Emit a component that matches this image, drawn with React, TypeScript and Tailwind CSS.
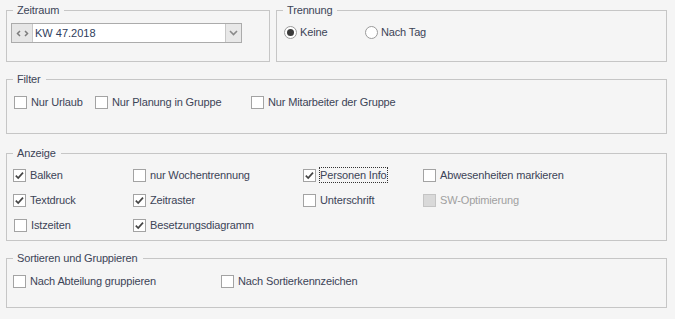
import React from "react";

const TEXT = "text-[#3c4457]";

function Box({ checked, disabled }: { checked?: boolean; disabled?: boolean }) {
  return (
    <span
      className={
        "flex h-[13px] w-[13px] shrink-0 items-center justify-center border " +
        (disabled ? "border-[#c4c4c4] bg-[#d9d9d9]" : "border-[#a3a3a3] bg-white")
      }
    >
      {checked && (
        <svg width="11" height="11" viewBox="0 0 11 11">
          <path d="M1.8 5.6 L4.2 8 L9 2.6" fill="none" stroke="#454545" strokeWidth="1.7" />
        </svg>
      )}
    </span>
  );
}

function Check({
  label,
  checked,
  disabled,
  focused,
  className = "",
}: {
  label: string;
  checked?: boolean;
  disabled?: boolean;
  focused?: boolean;
  className?: string;
}) {
  return (
    <div className={"flex h-[16px] items-center gap-[3px] " + className}>
      <Box checked={checked} disabled={disabled} />
      <span
        className={
          "whitespace-nowrap border leading-[14px] tracking-[-0.15px] " +
          (focused ? "border-dotted border-[#333]" : "border-transparent") +
          (disabled ? " text-[#a0a0a0]" : "")
        }
      >
        {label}
      </span>
    </div>
  );
}

function Radio({ label, checked, className = "" }: { label: string; checked?: boolean; className?: string }) {
  return (
    <div className={"flex h-[16px] items-center gap-[3px] " + className}>
      <span className="flex h-[13px] w-[13px] shrink-0 items-center justify-center rounded-full border border-[#9a9a9a] bg-white">
        {checked && <span className="h-[7px] w-[7px] rounded-full bg-[#3a3a3a]" />}
      </span>
      <span className="whitespace-nowrap leading-[14px] tracking-[-0.15px]">{label}</span>
    </div>
  );
}

function Group({
  title,
  className = "",
  children,
}: {
  title: string;
  className?: string;
  children?: React.ReactNode;
}) {
  return (
    <fieldset className={"min-w-0 border border-[#c6c6c6] " + className}>
      <legend className="ml-[6px] pl-[4px] pr-[5px] leading-[13px] tracking-[-0.15px]">{title}</legend>
      {children}
    </fieldset>
  );
}

export default function App() {
  return (
    <div
      className={
        "flex h-[319px] w-[675px] flex-col bg-[#f5f5f5] pl-[6px] pr-[8px] pt-[4px] text-[11px] font-['Liberation_Sans',Arial,sans-serif] " +
        TEXT
      }
    >
      <div className="flex gap-[6px]">
        <Group title="Zeitraum" className="h-[58px] w-[264px]">
          <div className="ml-[4px] mt-[6px] flex h-[20px] w-[231px] border border-[#ababab] bg-white">
            <div className="flex w-[21px] items-center justify-center border-r border-[#c8c8c8] bg-[#e6e6e6]">
              <svg width="13" height="7" viewBox="0 0 13 7">
                <path d="M4 1 L1.5 3.5 L4 6" fill="none" stroke="#7c7c7c" strokeWidth="1.5" />
                <path d="M9 1 L11.5 3.5 L9 6" fill="none" stroke="#7c7c7c" strokeWidth="1.5" />
              </svg>
            </div>
            <div className="flex flex-1 items-center pl-[2px] text-[#2f3d5c]">KW 47.2018</div>
            <div className="flex w-[16px] items-center justify-center border-l border-[#c8c8c8] bg-[#e8e8e8]">
              <svg width="9" height="6" viewBox="0 0 9 6">
                <path d="M1 1 L4.5 4.5 L8 1" fill="none" stroke="#8a8a8a" strokeWidth="1.6" />
              </svg>
            </div>
          </div>
        </Group>
        <Group title="Trennung" className="h-[58px] flex-1">
          <div className="ml-[7px] mt-[7px] flex">
            <Radio label="Keine" checked className="w-[81px]" />
            <Radio label="Nach Tag" />
          </div>
        </Group>
      </div>

      <Group title="Filter" className="mt-[11px] h-[61px]">
        <div className="ml-[7px] mt-[8px] flex">
          <Check label="Nur Urlaub" className="w-[81px]" />
          <Check label="Nur Planung in Gruppe" className="w-[156px]" />
          <Check label="Nur Mitarbeiter der Gruppe" />
        </div>
      </Group>

      <Group title="Anzeige" className="mt-[13px] h-[94px]">
        <div className="ml-[6px] mt-[7px] grid grid-cols-[120px_170px_120px_1fr] gap-y-[9px]">
          <Check label="Balken" checked />
          <Check label="nur Wochentrennung" />
          <Check label="Personen Info" checked focused />
          <Check label="Abwesenheiten markieren" />
          <Check label="Textdruck" checked />
          <Check label="Zeitraster" checked />
          <Check label="Unterschrift" />
          <Check label="SW-Optimierung" disabled />
          <Check label="Istzeiten" className="pl-[1px]" />
          <Check label="Besetzungsdiagramm" checked />
        </div>
      </Group>

      <Group title="Sortieren und Gruppieren" className="mt-[11px] h-[56px]">
        <div className="ml-[6px] mt-[8px] flex">
          <Check label="Nach Abteilung gruppieren" className="w-[208px]" />
          <Check label="Nach Sortierkennzeichen" />
        </div>
      </Group>
    </div>
  );
}
